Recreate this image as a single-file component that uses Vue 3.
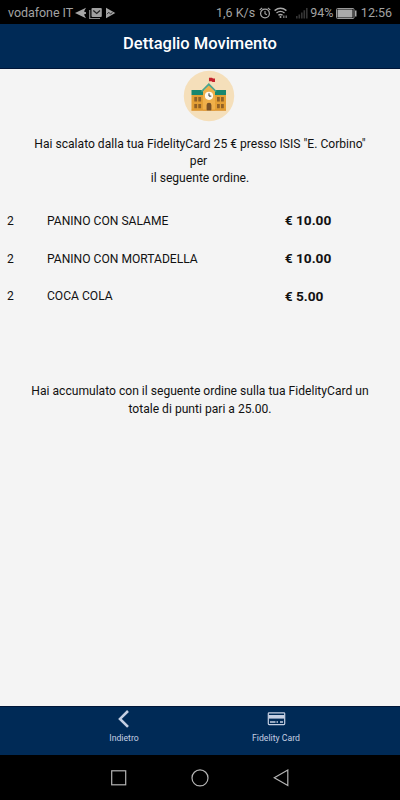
<script setup>
const items = [
  { qty: 2, name: 'PANINO CON SALAME', price: '€ 10.00' },
  { qty: 2, name: 'PANINO CON MORTADELLA', price: '€ 10.00' },
  { qty: 2, name: 'COCA COLA', price: '€ 5.00' },
]
</script>

<template>
  <div class="screen">
    <div class="status">
      <span class="carrier">vodafone IT</span>
      <svg class="notif" width="42" height="12" viewBox="0 0 42 12">
        <path d="M0 6 11 .8 9 4.500 11 5.200v1.600L9 7.500l2 3.700Z" fill="#a5a5a5" />
        <path d="M14.700 3v8.500H25" fill="none" stroke="#858585" stroke-width="1.200" />
        <rect x="16.500" y="1" width="10.300" height="9" rx="1" fill="#a0a0a0" />
        <path d="M18.300 3.500 21.700 6.500 25 3.500" fill="none" stroke="#222" stroke-width="1.300" />
        <path d="M31 .8 40.300 6 31 11.200Z" fill="#a5a5a5" />
        <path d="m32 7.200 1.800-2 1.800 2 1.800-2" fill="none" stroke="#333" stroke-width="1" />
      </svg>
      <span class="speed">1,6 K/s</span>
      <svg class="alarm" width="12" height="12" viewBox="0 0 12 12" fill="none" stroke="#a8a8a8">
        <circle cx="6" cy="6.500" r="4.400" stroke-width="1.200" />
        <path d="M6 4v2.800l1.800 1M.7 3 3.200.9M11.300 3 8.800.9" stroke-width="1.100" />
      </svg>
      <svg class="wifi" width="14" height="12" viewBox="0 0 14 12" fill="none" stroke="#a8a8a8" stroke-width="1.400">
        <path d="M.6 3.600Q6.500-1 12.400 3.600M2.500 6Q6.500 2.800 10.500 6M4.400 8.300Q6.500 6.600 8.600 8.300" />
        <circle cx="6.500" cy="10" r="1" fill="#a8a8a8" stroke="none" />
        <path d="M9.800 8.500v2.500M12.200 8.500v2.500" stroke="#888" stroke-width="1.200" />
      </svg>
      <svg class="signal" width="12" height="12" viewBox="0 0 12 12" fill="#363636">
        <path d="M0 9h1.600v2.500H0zM2.500 7.500h1.600v4H2.500zM5 5.500h1.600v6H5zM7.500 3.200h1.600v8.300H7.500zM10 1h1.600v10.500H10z" />
      </svg>
      <span class="percent">94%</span>
      <svg class="battery" width="21" height="11" viewBox="0 0 21 11">
        <rect x=".5" y=".5" width="17.500" height="10" rx="1" fill="none" stroke="#999" />
        <rect x="1.500" y="1.500" width="15" height="8" fill="#aaa" />
        <rect x="19" y="2.500" width="1.500" height="6" fill="#aaa" />
      </svg>
      <span class="clock">12:56</span>
    </div>

    <header class="header"><h1>Dettaglio Movimento</h1></header>

    <main class="content">
      <svg class="school" width="52" height="52" viewBox="0 0 52 52">
        <circle cx="26" cy="26" r="25.200" fill="#f5dfba" />
        <path d="M26 8v8" stroke="#e6d2ac" stroke-width=".8" />
        <path d="M26 7.800h3l1 .8h2v3.400h-2.500l-1-.8H26Z" fill="#c5222d" />
        <path d="M8.500 25h34.500v15.500H8.500Z" fill="#e5a035" />
        <path d="M8.500 20h34.500v5H8.500Z" fill="#19876f" />
        <path d="M20 40.500V21l6-6 6 6v19.500Z" fill="#f0b04a" />
        <path d="m18.500 21.500 7.300-7.200 7.300 7.200" fill="none" stroke="#4ba58c" stroke-width="1.700" />
        <path d="M11.300 27h2.800v4.500h-2.800zM15.300 27h2.800v4.500h-2.800zM34 27h2.800v4.500H34zM38 27h2.800v4.500H38zM11.300 34h2.800v4.200h-2.800zM15.300 34h2.800v4.200h-2.800zM34 34h2.800v4.200H34zM38 34h2.800v4.200H38z" fill="#926126" />
        <path d="M23.600 40.500v-5.500q0-2.300 2.400-2.300t2.400 2.300v5.500Z" fill="#795127" />
        <path d="M8.500 39.700h15v.8h-15zM28.500 39.700H43v.8H28.500z" fill="#d58725" />
        <circle cx="26" cy="25.800" r="4.100" fill="#fffaf0" />
        <path d="M26 23.300v2.800h2.300" fill="none" stroke="#333" stroke-width="1" />
      </svg>
      <p class="intro">Hai scalato dalla tua FidelityCard 25 € presso ISIS "E. Corbino"<br /><span class="per">per</span><br />il seguente ordine.</p>
      <ul class="items">
        <li v-for="item in items" :key="item.name">
          <span>{{ item.qty }}</span>
          <span>{{ item.name }}</span>
          <b>{{ item.price }}</b>
        </li>
      </ul>
      <p class="points">Hai accumulato con il seguente ordine sulla tua FidelityCard un<br />totale di punti pari a 25.00.</p>
    </main>

    <nav class="tabs">
      <div class="tab">
        <svg width="20" height="20" viewBox="0 0 20 20"><path d="m14 2-8 7.900 8 7.900" fill="none" stroke="#c5cfe2" stroke-width="2.600" /></svg>
        <span>Indietro</span>
      </div>
      <div class="tab">
        <svg width="20" height="20" viewBox="0 0 20 20">
          <rect x="2.300" y="3.800" width="16.400" height="11.800" rx=".8" fill="none" stroke="#c5cfe2" stroke-width="1.200" />
          <path d="M2.500 6h16v3.600h-16z" fill="#c5cfe2" />
          <path d="M4 13h5.500M10.500 13h1.500M14 13h3" stroke="#c5cfe2" stroke-width="1.500" />
        </svg>
        <span>Fidelity Card</span>
      </div>
    </nav>

    <div class="system">
      <svg width="20" height="20" viewBox="0 0 20 20"><rect x="2.700" y="2.800" width="14" height="14" /></svg>
      <svg width="20" height="20" viewBox="0 0 20 20"><circle cx="10" cy="9.900" r="8" /></svg>
      <svg width="20" height="20" viewBox="0 0 20 20"><path d="M15.800 2.100v15.300L2.300 9.800Z" /></svg>
    </div>
  </div>
</template>

<style>
body {
  margin: 0;
}
</style>

<style scoped>
.screen {
  display: flex;
  flex-direction: column;
  width: 400px;
  height: 800px;
  overflow: hidden;
  background: #f4f4f4;
  color: #111;
  font-family: Roboto, "Liberation Sans", sans-serif;
}
.status {
  display: flex;
  align-items: center;
  box-sizing: border-box;
  height: 24px;
  flex: none;
  padding: 2px 8px 0;
  background: #000;
  color: #a3a3a3;
  font-size: 12.5px;
  line-height: 20px;
  white-space: nowrap;
}
.status svg {
  flex: none;
}
.carrier {
  letter-spacing: -0.05px;
}
.notif {
  margin-left: 2px;
}
.speed {
  margin-left: auto;
}
.alarm {
  margin-left: 4px;
}
.wifi {
  margin-left: 3px;
}
.signal {
  margin-left: 8px;
}
.percent {
  margin-left: 2px;
}
.battery {
  margin-left: 3px;
}
.clock {
  margin-left: 3.5px;
}
.header {
  box-sizing: border-box;
  height: 45px;
  flex: none;
  border-bottom: 1px solid #001638;
  background: #002a56;
  color: #fff;
  text-align: center;
}
h1 {
  margin: 0;
  font-size: 16.5px;
  font-weight: 500;
  line-height: 39px;
}
.content {
  display: flex;
  flex: 1;
  flex-direction: column;
  align-items: center;
  padding-top: 1px;
  font-size: 12.1px;
}
.school {
  flex: none;
  margin-left: 18px;
}
p {
  margin: 0;
  line-height: 17.3px;
  text-align: center;
  white-space: nowrap;
}
.intro {
  margin-top: 13.5px;
}
.per {
  padding-right: 3px;
}
.items {
  width: 400px;
  margin: 14.9px 0 0;
  padding: 0;
  list-style: none;
}
.items li {
  display: grid;
  grid-template-columns: 40px 237.7px 1fr;
  align-items: center;
  height: 37.600px;
  padding-left: 7px;
}
.items b {
  padding-bottom: 1.5px;
  font-size: 13.7px;
}
.points {
  margin-top: 68.4px;
}
.tabs {
  display: flex;
  box-sizing: border-box;
  height: 49px;
  flex: none;
  padding: 0 48px;
  border-top: 1px solid #001638;
  background: #002a56;
}
.tab {
  display: flex;
  flex: 1;
  flex-direction: column;
  align-items: center;
  padding-top: 2px;
  color: #c5cfe2;
  font-size: 8.700px;
  line-height: 18px;
}
.tab svg {
  flex: none;
}
.system {
  display: flex;
  align-items: center;
  justify-content: center;
  gap: 61.500px;
  height: 45px;
  flex: none;
  background: #000;
}
.system svg {
  fill: none;
  stroke: #b5b5b5;
  stroke-width: 1.200;
}
</style>
